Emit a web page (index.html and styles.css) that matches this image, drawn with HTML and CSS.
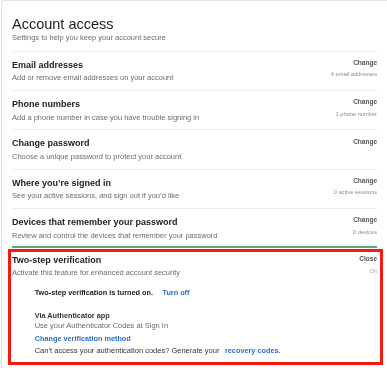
FILE: index.html
```html
<!DOCTYPE html>
<html lang="en">
<head>
    <meta charset="UTF-8">
    <meta name="viewport" content="width=device-width, initial-scale=1.0">
    <title>Account access</title>
    <link rel="stylesheet" href="styles.css">
</head>
<body>
    <div class="card">
        <div class="card-header">
            <h1>Account access</h1>
            <p class="subtitle">Settings to help you keep your account secure</p>
        </div>

        <div class="row">
            <div class="row-main">
                <h2>Email addresses</h2>
                <p class="subtitle">Add or remove email addresses on your account</p>
            </div>
            <div class="row-side">
                <span class="action">Change</span>
                <span class="count">4 email addresses</span>
            </div>
        </div>

        <div class="row">
            <div class="row-main">
                <h2>Phone numbers</h2>
                <p class="subtitle">Add a phone number in case you have trouble signing in</p>
            </div>
            <div class="row-side">
                <span class="action">Change</span>
                <span class="count">1 phone number</span>
            </div>
        </div>

        <div class="row">
            <div class="row-main">
                <h2>Change password</h2>
                <p class="subtitle">Choose a unique password to protect your account</p>
            </div>
            <div class="row-side">
                <span class="action">Change</span>
            </div>
        </div>

        <div class="row">
            <div class="row-main">
                <h2>Where you’re signed in</h2>
                <p class="subtitle">See your active sessions, and sign out if you’d like</p>
            </div>
            <div class="row-side">
                <span class="action">Change</span>
                <span class="count">0 active sessions</span>
            </div>
        </div>

        <div class="row row-active">
            <div class="row-main">
                <h2>Devices that remember your password</h2>
                <p class="subtitle">Review and control the devices that remember your password</p>
            </div>
            <div class="row-side">
                <span class="action">Change</span>
                <span class="count">0 devices</span>
            </div>
        </div>

        <div class="two-step">
            <div class="row two-step-head">
                <div class="row-main">
                    <h2>Two-step verification</h2>
                    <p class="subtitle">Activate this feature for enhanced account security</p>
                </div>
                <div class="row-side">
                    <span class="action">Close</span>
                    <span class="count count-on">On</span>
                </div>
            </div>

            <div class="two-step-body">
                <p class="status">Two-step verification is turned on. <a href="#" class="link">Turn off</a></p>
                <p class="method">Via Authenticator app</p>
                <p class="subtitle">Use your Authenticator Codes at Sign In</p>
                <p class="change-method"><a href="#" class="link">Change verification method</a></p>
                <p class="recovery">Can’t access your authentication codes? Generate your <a href="#" class="link">recovery codes.</a></p>
            </div>
        </div>
    </div>
</body>
</html>
```

FILE: styles.css
```css
* {
    box-sizing: border-box;
    margin: 0;
    padding: 0;
}

body {
    font-family: 'Liberation Sans', Arial, sans-serif;
    background-color: #fff;
    color: #222;
    overflow: hidden;
    -webkit-font-smoothing: antialiased;
}

.card {
    margin-left: 1px;
    border-top: 1px solid #e3e3e3;
    border-left: 1px solid #e3e3e3;
    border-top-left-radius: 4px;
    padding: 0 10px 0 10px;
    min-height: 368px;
    will-change: transform;
}

.card-header {
    padding: 15px 0 7.3px;
    border-bottom: 1px solid #ececec;
}

h1 {
    font-size: 14.5px;
    line-height: 17px;
    font-weight: normal;
    color: #1e1e1e;
}

.card-header .subtitle {
    margin-top: 0.4px;
}

.subtitle {
    font-size: 7.5px;
    line-height: 10px;
    color: #6c6c6c;
}

.row {
    display: flex;
    justify-content: space-between;
    padding: 8.1px 0 6.6px;
    border-bottom: 1px solid #ececec;
}

.row-active {
    border-bottom: 2px solid #5fa57f;
    padding-bottom: 5.6px;
}

h2 {
    font-size: 9px;
    line-height: 11px;
    font-weight: bold;
    color: #222;
}

.row-main .subtitle {
    margin-top: 2.6px;
}

.row-side {
    display: flex;
    flex-direction: column;
    align-items: flex-end;
    margin-top: -0.8px;
}

.action {
    font-size: 6.5px;
    line-height: 8px;
    font-weight: bold;
    color: #555;
}

.count {
    margin-top: 3.4px;
    font-size: 5.7px;
    line-height: 8px;
    color: #8c8c8c;
}

.count-on {
    color: #a0a0a0;
}

/* highlighted section */
.two-step {
    margin: 1.3px -6px 0 -4px;
    border: 3px solid #f41b0e;
    padding: 0 3px 6px 1px;
}

.two-step-head {
    padding: 2.7px 0 0;
    border-bottom: none;
}

.two-step-head .subtitle {
    margin-top: 1.7px;
}

.two-step-head .row-side {
    margin-top: 0;
}

.two-step-head .count {
    margin-top: 3.5px;
}

.two-step-body {
    padding-left: 22.7px;
    margin-top: 10.1px;
}

.status,
.method,
.change-method {
    font-size: 7.3px;
    line-height: 10px;
    font-weight: bold;
    color: #222;
}

.status .link {
    margin-left: 7.5px;
}

.method {
    margin-top: 12.7px;
    color: #333;
}

.change-method {
    margin-top: 3.4px;
}

.recovery {
    margin-top: 2.2px;
    font-size: 7.5px;
    line-height: 10px;
    color: #333;
}

.recovery .link {
    margin-left: 3.5px;
    font-size: 7.3px;
    font-weight: bold;
}

.link {
    color: #2a72c6;
    text-decoration: none;
}
```
